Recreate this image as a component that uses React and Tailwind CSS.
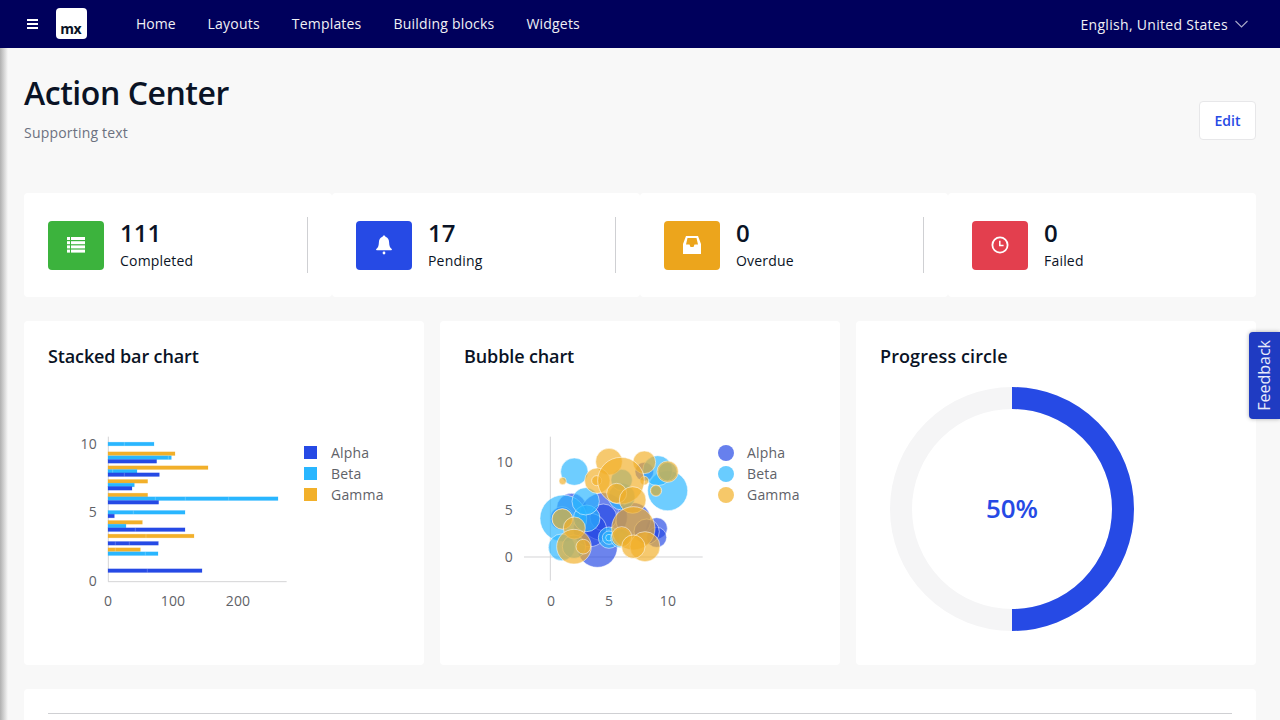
const A = "#264ae5", B = "#29b6ff", G = "#f2b02a";

const bars = [
  [B, 42, 252, [163]], [G, 71, 315, []], [B, 83, 304, [295]], [A, 94, 260, []],
  [G, 113, 414, []], [B, 124, 201, [128]], [A, 134, 268, [163]], [G, 154, 233, []],
  [B, 165, 193, []], [A, 175, 186, []], [G, 195, 233, []], [B, 206, 624, [256, 346, 476]],
  [A, 217, 266, []], [B, 247, 345, [190]], [A, 258, 133, []], [G, 277, 217, []],
  [B, 288, 168, []], [A, 299, 345, [196]], [G, 318, 372, [228]], [A, 340, 265, [136, 178]],
  [G, 359, 211, [136]], [B, 371, 264, [226]], [A, 422, 396, [232]],
];

const bubbles = [
  [A, 322, 352, 60], [A, 245, 235, 45], [A, 340, 260, 72], [A, 340, 262, 40], [A, 500, 295, 32], [A, 500, 322, 30],
  [A, 216, 265, 35], [A, 300, 300, 50], [A, 430, 270, 52], [A, 470, 305, 38], [A, 463, 125, 28],
  [B, 253, 125, 41], [B, 533, 182, 60], [B, 503, 122, 45], [B, 220, 265, 70], [B, 290, 265, 40],
  [B, 287, 214, 41], [B, 215, 352, 40], [B, 357, 323, 32], [B, 357, 323, 20], [B, 357, 323, 10],
  [B, 390, 325, 28], [B, 395, 200, 40], [B, 395, 150, 32], [B, 217, 267, 30], [B, 252, 350, 35],
  [B, 533, 125, 28], [B, 498, 182, 15], [B, 395, 320, 25],
  [G, 357, 95, 40], [G, 322, 152, 38], [G, 320, 152, 15],
  [G, 218, 153, 11], [G, 463, 97, 34], [G, 533, 125, 32], [G, 463, 152, 13], [G, 498, 182, 17],
  [G, 393, 152, 70], [G, 380, 190, 30], [G, 428, 210, 40], [G, 217, 267, 31], [G, 253, 294, 33], [G, 252, 350, 52],
  [G, 280, 350, 22], [G, 430, 295, 65], [G, 465, 350, 45], [G, 395, 320, 30], [G, 430, 350, 35],
];

function Tx({ x, y, anchor = "start", children }) {
  return (
    <text x={x} y={y} textAnchor={anchor} dominantBaseline="central" fontSize="14" letterSpacing="0.2" fill="#5f6268" fontFamily="'Open Sans', sans-serif">
      {children}
    </text>
  );
}

function BarChart() {
  return (
    <svg width="352" height="220" viewBox="0 0 352 220" className="block">
      <g transform="translate(22 30) scale(0.33333)">
        <line x1="115" y1="20" x2="115" y2="455" stroke="#d4d4d6" strokeWidth="3" />
        <line x1="114" y1="455" x2="650" y2="455" stroke="#d4d4d6" strokeWidth="3" />
        {bars.map(([c, y, e, s], i) => (
          <g key={i}>
            <rect x="114" y={y - 5.5} width={e - 114} height="11" fill={c} stroke={c} strokeOpacity="0.3" strokeWidth="2" />
            {s.map((v) => (
              <line key={v} x1={v} x2={v} y1={y - 5.5} y2={y + 5.5} stroke="#fff" strokeOpacity="0.35" strokeWidth="2" />
            ))}
          </g>
        ))}
      </g>
      <Tx x="49" y="43" anchor="end">10</Tx>
      <Tx x="49" y="111" anchor="end">5</Tx>
      <Tx x="49" y="180" anchor="end">0</Tx>
      <Tx x="60" y="200" anchor="middle">0</Tx>
      <Tx x="125" y="200" anchor="middle">100</Tx>
      <Tx x="190" y="200" anchor="middle">200</Tx>
      {[[A, "Alpha", 52], [B, "Beta", 73], [G, "Gamma", 94]].map(([c, t, y]) => (
        <g key={t}>
          <rect x="256" y={y - 6} width="13" height="13" fill={c} />
          <Tx x="283" y={y}>{t}</Tx>
        </g>
      ))}
    </svg>
  );
}

function BubbleChart() {
  return (
    <svg width="352" height="220" viewBox="0 0 352 220" className="block">
      <g transform="translate(26 30) scale(0.33333)">
        <line x1="181" y1="20" x2="181" y2="452" stroke="#d4d4d6" strokeWidth="3" />
        <line x1="102" y1="381" x2="638" y2="381" stroke="#d4d4d6" strokeWidth="3" />
        {bubbles.map(([c, x, y, r], i) => (
          <circle key={i} cx={x} cy={y} r={r} fill={c} fillOpacity="0.68" stroke="#fff" strokeOpacity="0.8" strokeWidth="2" />
        ))}
      </g>
      <Tx x="49" y="61" anchor="end">10</Tx>
      <Tx x="49" y="109" anchor="end">5</Tx>
      <Tx x="49" y="156" anchor="end">0</Tx>
      <Tx x="87" y="200" anchor="middle">0</Tx>
      <Tx x="145" y="200" anchor="middle">5</Tx>
      <Tx x="204" y="200" anchor="middle">10</Tx>
      {[[A, "Alpha", 52], [B, "Beta", 73], [G, "Gamma", 94]].map(([c, t, y]) => (
        <g key={t}>
          <circle cx="262" cy={y + 1} r="8" fill={c} fillOpacity="0.7" />
          <Tx x="283" y={y}>{t}</Tx>
        </g>
      ))}
    </svg>
  );
}

function ListIcon() {
  return (
    <svg width="18" height="18" viewBox="0 0 18 18" fill="#fff">
      <rect x="0" y="1" width="3" height="3" /><rect x="4" y="1" width="14" height="3" />
      <rect x="0" y="5.2" width="3" height="3" /><rect x="4" y="5.2" width="14" height="3" />
      <rect x="0" y="9.4" width="3" height="3" /><rect x="4" y="9.4" width="14" height="3" />
      <rect x="0" y="13.6" width="3" height="3" /><rect x="4" y="13.6" width="14" height="3" />
    </svg>
  );
}
function BellIcon() {
  return (
    <svg width="18" height="20" viewBox="0 0 18 20" fill="#fff">
      <path d="M9 0.5c.9 0 1.4.6 1.4 1.3 2.4.6 3.6 2.7 3.7 5.4.1 3 .6 5.2 2.6 6.8.4.4.3 1.2-.5 1.2H1.8c-.8 0-.9-.8-.5-1.2 2-1.6 2.5-3.8 2.6-6.8.1-2.7 1.3-4.8 3.7-5.4C7.6 1.1 8.1.5 9 .5z" />
      <circle cx="9" cy="18" r="1.4" />
    </svg>
  );
}
function InboxIcon() {
  return (
    <svg width="18" height="20" viewBox="0 0 18 20" fill="#fff">
      <path fillRule="evenodd" d="M3 1h12l3 8v10H0V9L3 1zM4.5 3L3 9.5h3.5l1 2.5h3l1-2.5H15L13.5 3h-9z" />
    </svg>
  );
}
function ClockIcon() {
  return (
    <svg width="18" height="18" viewBox="0 0 18 18" fill="none" stroke="#fff">
      <circle cx="9" cy="9" r="7.6" strokeWidth="1.8" />
      <path d="M8.8 4.8V9.6H12.6" strokeWidth="1.5" />
    </svg>
  );
}

function Stat({ color, icon, value, label, last }) {
  return (
    <div className="bg-white rounded-[4px] p-6">
      <div className={`flex items-center h-14 ${last ? "" : "border-r border-[#cfd0d3]"}`}>
        <div className={`w-14 h-[49px] rounded-[4px] flex items-center justify-center ${color}`}>{icon}</div>
        <div className="ml-4 pb-[2px]">
          <div className="text-[24px] leading-[30px] font-semibold text-[#0a1325]">{value}</div>
          <div className="text-[14px] leading-[20px] mt-[3px] tracking-[0.2px] text-[#0a1325]">{label}</div>
        </div>
      </div>
    </div>
  );
}

function Card({ title, wide, children }) {
  return (
    <div className="bg-white rounded-[4px] h-[344px] px-6 pb-6 pt-[23px]">
      <h3 className={`text-[18px] leading-[24px] font-semibold text-[#0a1325] ${wide ? "tracking-[0.1px]" : "tracking-[-0.12px]"}`}>{title}</h3>
      {children}
    </div>
  );
}

export default function App() {
  return (
    <div className="relative h-[720px] overflow-hidden bg-[#f8f8f8] font-['Open_Sans',sans-serif]">
      <nav className="h-12 bg-[#00005c] flex items-center text-white text-[14px] tracking-[0.2px]">
        <button className="ml-[27px] w-[11px] flex flex-col gap-[2px]">
          <span className="h-[2px] bg-white block" />
          <span className="h-[2px] bg-white block" />
          <span className="h-[2px] bg-white block" />
        </button>
        <div className="ml-[18px] -mt-px w-[31px] h-[31px] bg-white rounded-[4px] flex items-end justify-end pr-[6px]">
          <span className="text-[#0a1325] text-[14px] leading-[20px] font-bold tracking-[-0.5px]">mx</span>
        </div>
        <div className="ml-[49px] -mt-px flex gap-8 text-[#f0f0f5]">
          <span className="tracking-normal">Home</span>
          <span>Layouts</span>
          <span>Templates</span>
          <span>Building blocks</span>
          <span>Widgets</span>
        </div>
        <div className="ml-auto mr-[32px] flex items-center gap-[7px] tracking-[0.3px] text-[#f0f0f5]">
          <span>English, United States</span>
          <svg width="13" height="8" viewBox="0 0 13 8" fill="none" stroke="#a9a9c8" strokeWidth="1.1">
            <path d="M0.5 1L6.5 7L12.5 1" />
          </svg>
        </div>
      </nav>

      <main className="px-6 pt-6">
        <header className="h-[97px] flex items-center justify-between mb-6">
          <div className="self-start">
            <h1 className="text-[32px] leading-[42px] font-semibold tracking-[-0.45px] text-[#0a1325]">Action Center</h1>
            <p className="mt-[9px] text-[14px] leading-[20px] tracking-[0.2px] text-[#6c7180]">Supporting text</p>
          </div>
          <button className="w-[57px] h-[39px] bg-white border border-[#e7e7e9] rounded-[4px] text-[14px] font-semibold text-[#264ae5]">Edit</button>
        </header>

        <section className="grid grid-cols-4">
          <Stat color="bg-[#3cb33d]" icon={<ListIcon />} value="111" label="Completed" />
          <Stat color="bg-[#264ae5]" icon={<BellIcon />} value="17" label="Pending" />
          <Stat color="bg-[#eca51c]" icon={<InboxIcon />} value="0" label="Overdue" />
          <Stat color="bg-[#e33f4e]" icon={<ClockIcon />} value="0" label="Failed" last />
        </section>

        <section className="grid grid-cols-3 gap-4 mt-6">
          <Card title="Stacked bar chart">
            <div className="mt-[32px]"><BarChart /></div>
          </Card>
          <Card title="Bubble chart">
            <div className="mt-[32px]"><BubbleChart /></div>
          </Card>
          <Card title="Progress circle" wide>
            <div className="mt-[19px] ml-[10px]">
              <svg width="244" height="244" viewBox="0 0 244 244" className="block">
                <circle cx="122" cy="122" r="111" fill="none" stroke="#f5f5f6" strokeWidth="22" />
                <path d="M122 11A111 111 0 0 1 122 233" fill="none" stroke="#264ae5" strokeWidth="22" />
                <text x="122" y="121" textAnchor="middle" dominantBaseline="central" fontSize="26" fontWeight="600" fill="#264ae5" fontFamily="'Open Sans', sans-serif">50%</text>
              </svg>
            </div>
          </Card>
        </section>

        <section className="mt-6 bg-white rounded-[4px] p-6 h-[200px]">
          <div className="border-t border-[#cfd0d3]" />
        </section>
      </main>

      <div className="absolute left-0 top-12 bottom-0 w-2 bg-linear-to-r from-[#b0b0b0] to-transparent" />
      <div className="absolute right-0 top-[332px] w-[31px] h-[87px] bg-[#1f3bc2] rounded-l-[4px] shadow-[0_0_4px_rgba(0,0,0,0.3)] flex items-center justify-center pr-[2px]">
        <span className="[writing-mode:vertical-rl] rotate-180 text-[16px] text-[#e8ebfa]">Feedback</span>
      </div>
    </div>
  );
}
